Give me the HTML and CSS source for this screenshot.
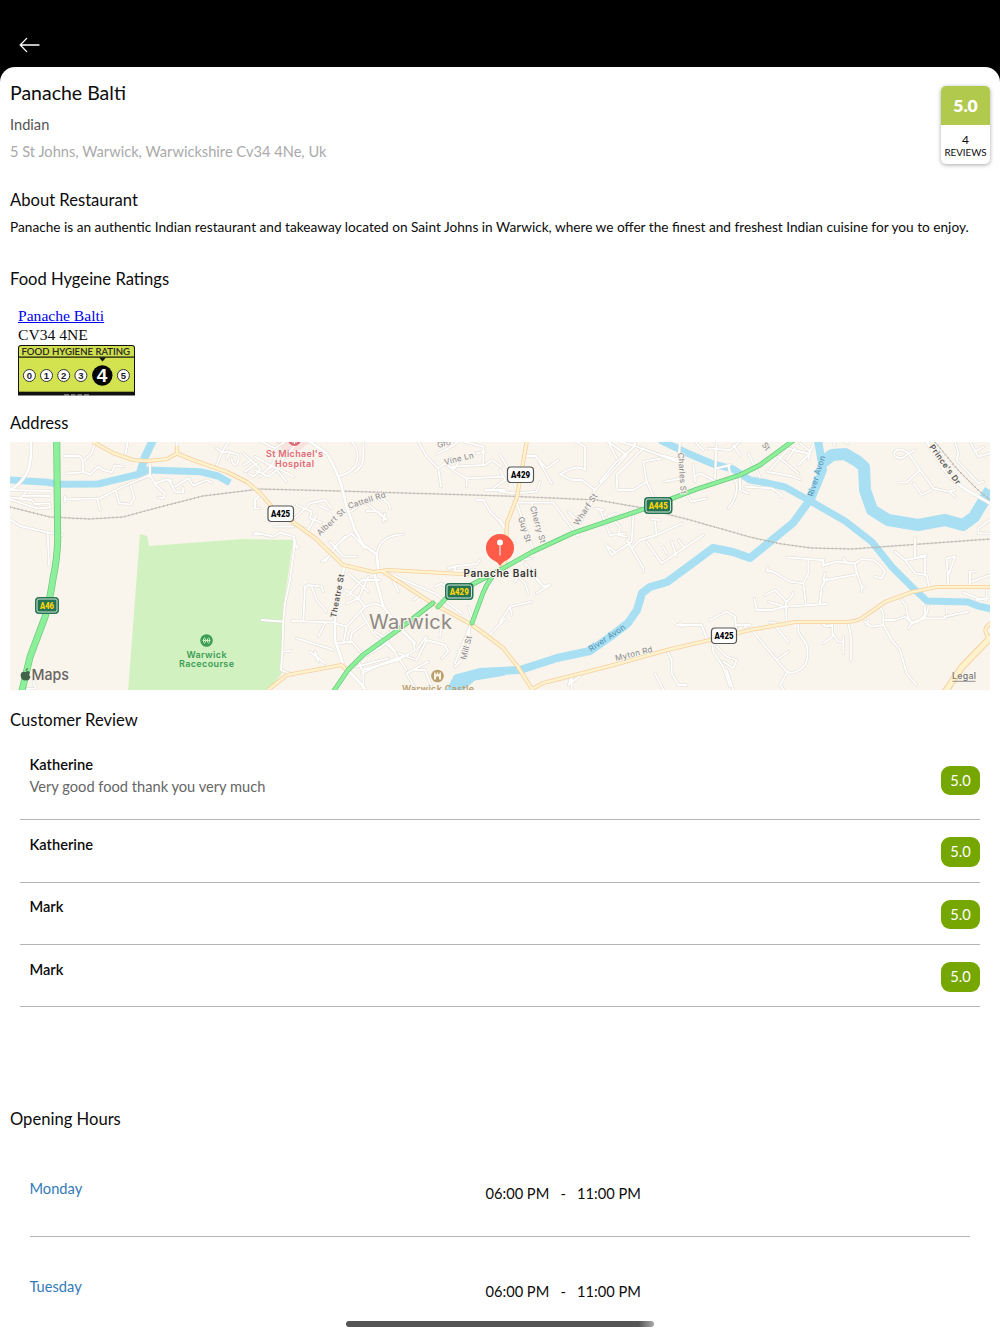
FILE: index.html
```html
<!DOCTYPE html>
<html lang="en">
<head>
<meta charset="utf-8">
<title>Panache Balti</title>
<link rel="stylesheet" href="styles.css">
</head>
<body>
<header class="topbar">
  <svg class="back" viewBox="0 0 22 16" width="22" height="16"><path d="M20 8H1.2M7.700 1.400 1.200 8 7.700 14.600"/></svg>
</header>
<main class="sheet">
  <section class="intro">
    <div class="intro-text">
      <h1>Panache Balti</h1>
      <p class="cuisine">Indian</p>
      <p class="addr">5 St Johns, Warwick, Warwickshire Cv34 4Ne, Uk</p>
    </div>
    <div class="score">
      <div class="score-value">5.0</div>
      <div class="score-count"><span>4</span><small>REVIEWS</small></div>
    </div>
  </section>

  <h2 class="about-title">About Restaurant</h2>
  <p class="about">Panache is an authentic Indian restaurant and takeaway located on Saint Johns in Warwick, where we offer the finest and freshest Indian cuisine for you to enjoy.</p>

  <h2 class="hygiene-title">Food Hygeine Ratings</h2>
  <div class="hygiene">
    <a href="#">Panache Balti</a>
    <span>CV34 4NE</span>
    <svg class="fhrs" viewBox="0 0 117 51" width="117" height="51">
      <path d="M0 50.500V3Q0 0 3 0H114Q117 0 117 3V50.500Z" fill="#111"/>
      <path d="M1 11.500V3Q1 1 3 1H114Q116 1 116 3V11.500Z" fill="#cfdf4d"/>
      <rect x="1" y="12.700" width="115" height="34" fill="#d3e34f"/>
      <text x="3.500" y="10" textLength="108.500" lengthAdjust="spacingAndGlyphs" class="fh-title">FOOD HYGIENE RATING</text>
      <path d="M81 12.500H88L84.500 16.500Z" fill="#111"/>
      <g class="fh-dots"><circle cx="11.400" cy="30.500" r="6"/><circle cx="28.500" cy="30.500" r="6"/><circle cx="45.700" cy="30.500" r="6"/><circle cx="62.900" cy="30.500" r="6"/><circle cx="105.400" cy="30.500" r="6"/></g>
      <circle cx="84.300" cy="30.500" r="10.200" fill="#050505"/>
      <g class="fh-num"><text x="11.400" y="34">0</text><text x="28.500" y="34">1</text><text x="45.700" y="34">2</text><text x="62.900" y="34">3</text><text x="105.400" y="34">5</text></g>
      <text x="84" y="37.300" class="fh-big">4</text>
      <path d="M46 50H51M53 50H57.500M59.500 50H64M66 50H71" stroke="#ccc" stroke-width="1"/>
    </svg>
  </div>

  <h2 class="address-title">Address</h2>
  <svg class="map" viewBox="10 442 980 248" width="980" height="248">
    <defs>
      <g id="streets">
        <g transform="translate(10 440) scale(.33333)">
          <path class="wide" d="M62 5Q66 70 50 100Q30 135 0 150"/>
          <path d="M165 48H205Q215 50 218 65L220 95M218 65 245 40 255 10M170 100 210 98 220 95 240 104 265 80 280 90 305 97 315 76 340 80M345 50 353 5M500 35V5M620 75 635 38 655 5M620 25 638 38 655 35 685 45Q690 65 675 75Q665 70 665 55M650 55 658 42M700 40 750 85M700 75 725 60M705 95 740 70M715 100 730 110 750 90"/>
          <path d="M420 65V105L350 135 318 150 270 175 165 178M165 170V185M262 175 270 210M318 155 328 190 362 193 373 175 362 138M420 105 440 138 465 160 460 175 445 172M435 130 470 118 480 125 495 155 520 158 518 142M470 118 485 122M495 140 535 115 550 137 590 120 605 128"/>
          <path d="M0 150 125 153M30 175 50 155M0 172 65 180 75 192 118 190 120 203 80 205 0 178M35 167 120 168M0 238 30 258 115 278 158 285M113 280 117 375M70 725 78 745 50 747M750 165 735 180V205H750M730 283H750"/>
        </g>
        <g transform="translate(255 440) scale(.33333)">
          <path class="wide" d="M165 5 215 40Q245 90 260 140L275 200 300 270 325 315 365 342 370 390 357 397 385 500 430 560 475 605 480 610"/>
          <path d="M290 5Q320 35 300 80Q285 100 253 108M325 5V50Q325 80 300 95M0 50 60 85 130 5M20 5 60 25 90 5M0 90 40 110 65 90 95 125M45 85 75 30M15 110 50 75 115 110M490 5 515 50 550 85 558 140M550 85 570 70 600 95 635 115V140M545 42 580 25 610 5M575 75 600 85 610 65M625 5 685 20V75L590 80M665 40 690 35M690 75 710 60 740 80M635 115 745 110M715 145 750 120M690 150H750"/>
          <path d="M665 180H685L705 215 750 260M105 245 135 220 165 190 210 180 230 205M125 195 170 215 165 235 200 248M135 260 160 270 185 225M190 195 220 210M0 278 55 290 75 278 117 290 125 325M60 260H115M117 290V320H130M210 365 250 310 290 280 330 325M225 305 265 350 305 350M240 320 270 290M200 365 220 350M285 215 330 185 395 240 370 215 335 213M390 220 385 245M375 170 400 190 405 205M365 342Q375 285 445 283M580 385 605 378 665 372 675 360M600 380V398M585 395 660 390"/>
          <path class="wide" d="M268 380 240 500 240 600 265 675 330 745"/>
          <path d="M145 545 150 440 160 435 200 440 205 455M170 440 185 480 215 515M118 320 105 420 90 490 85 545 82 635 78 690 115 705M85 635 108 633M20 540 83 545M110 543 235 547M210 550 190 590M125 595 235 630M165 635 210 670M180 635 190 665M240 610 290 605 325 645M240 550 275 560 265 610M270 450 310 475 340 410M275 470 320 420 375 420M405 400 430 455M280 400 340 455M275 560 330 500 360 490 385 500M275 490 310 475 330 500M320 520 355 580 420 635 385 590 430 560M360 575 400 600M285 610 290 580 330 550M400 600 380 620 310 660 320 690 430 660 480 630 475 605M320 700 395 665 460 645M305 680 400 655M325 690V745M420 640 455 690"/>
          <path d="M400 400 540 460 620 520M540 440 560 430 580 450M475 480 495 465M555 590 560 550M645 550 635 650M620 660 600 680M600 670 645 560M700 590 750 535M495 750 480 745 455 700 520 665M480 690 510 690 530 740M430 640 485 660 515 600 570 615 580 635 560 655M485 630 515 590M640 500 650 530"/>
        </g>
        <g transform="translate(500 440) scale(.33333)">
          <path d="M80 48H105L140 85 175 60M118 65 155 130M180 103 205 90Q235 75 255 90V20L230 5M180 103 215 120 245 120 285 150 380 45 325 5M325 5 350 55M285 150 275 170M300 125 350 65 405 18 545 70M430 25 350 105 352 150 400 150 440 125 430 65 485 55M440 125 460 170M405 18V5M360 5 405 18 480 45 540 60M495 125 545 115M535 70 540 5M555 155 575 185 620 175M580 75 585 125M585 110 600 100 650 125M645 115 650 5M650 85 690 75M685 75 690 100 710 130Q715 170 685 205M720 105V150L745 160M585 5 610 30M625 25 690 30 720 5M700 15 720 45M0 155 45 160 110 155 120 125M0 45 30 95 50 150M0 90 15 120"/>
          <path d="M50 188H160L230 285M50 190 75 260 100 330M95 190 110 240 130 305M0 240 12 265M10 310H45M205 215 240 250M235 275V290M240 250 280 180"/>
          <path d="M300 210 315 245 330 285 375 280M285 205 310 210M325 230 345 220M318 315 335 345 395 305 400 225 390 210M345 335 325 320M340 240 360 260 355 285 380 290M380 300 430 385 430 395M395 325 420 300 470 285 465 245M455 237 480 240M440 305 485 370 610 285M470 285 545 250M500 340 490 320M515 305 530 350M535 300 550 320M60 360 95 355M75 370 90 385 75 395M40 395 75 430 85 460M95 400 130 440 145 435M110 460 150 435M0 545 30 500 95 485M30 500 35 525M60 400 45 425M105 405 125 435"/>
          <path d="M530 555H605L620 595M540 550 545 560M630 540 680 515 705 530 710 575M635 600 640 635 670 680 690 740M650 620 680 650 710 660 700 685 670 665M710 555H750M500 630 515 660V700L535 735H560M465 700 490 750M215 710V750M175 720 215 710 205 735 250 700M680 690 700 750"/>
        </g>
        <g transform="translate(745 440) scale(.33333)">
          <path class="wide" d="M545 5 580 60Q610 120 665 150L735 190"/>
          <path d="M10 40 45 112M65 95 145 110 165 118M75 90 130 25 145 30 190 40M100 50 160 100M125 60 150 25M160 75 190 45 205 15M165 10 195 35 190 60M0 140 80 145 110 165V172M265 5 270 15M300 5 310 10M490 40Q465 20 450 35Q440 50 470 55Q480 50 490 40L525 90 485 128 460 128M525 90 565 145 610 155 630 150M505 130 530 165 560 150M615 155 630 170M490 40 510 30M630 5 640 40 635 60 700 130 715 125M675 5 700 50 735 40M690 35 715 20M735 240 700 265V280H735M700 265 735 240"/>
          <path d="M125 352 230 360 240 375 275 365 330 370 350 357 385 360 405 375 420 395 410 415 390 410M235 360V378M295 355 305 370M190 360V400L175 430 182 490M65 390 85 395 135 425 175 430M68 382V395M240 400 235 420 245 420 335 403 330 370M330 380 350 440 360 440M350 440V453M245 415 230 440 225 490M60 465 90 450 125 485 140 470 145 458M70 485 120 500 245 492M28 475 35 510 80 510 120 500M122 485 125 545"/>
          <path d="M510 295V350M450 335 480 360 510 400 545 405 552 440M480 360 540 350 540 405M520 350 545 345M610 435 605 355 630 350 612 400M675 440V395L690 395M680 425 735 405M655 458 700 475 725 480V445M695 480 735 475M470 480 485 500V520L500 550 520 545M415 540H450L480 530 500 548 540 535 600 535M540 535V500M550 500 545 520 525 540M600 530 670 515M605 520V500M360 545 380 560 415 555M370 540 365 555M490 565 500 550"/>
          <path d="M405 500 415 520V555L440 600 465 630 485 700 515 735M160 550V575L185 615Q195 665 170 685Q145 705 125 695L95 660 25 575M95 660 130 635M125 700 105 735 118 752M85 550 130 607M230 550 245 560 262 555V590L235 610M262 580 280 605 295 605M295 590V640M310 550 318 590V660M0 560 25 575M75 547 100 550"/>
        </g>
      </g>
      <g id="mainroads">
        <path d="M93 442 113 453 133 460Q150 462 167 459L177 453.500 193 460 227 472 247 482 260 493 272 507 315 538 343 565 373 572 388 570 462 574 495 575"/>
        <path d="M382 571 432 603 472 625 482 632 503 648 518 667 532 689 543 683 610 666 667 650 710 640 750 630 795 622H845Q855 622 862 618L885 602 912 592 937 587H990"/>
        <path d="M268 690 287 675 342 665 347 671M532 689V695M527 440 517 497 507 523 505 563 496 575M991 623Q985 627 985.500 631L988 638M177 453V446"/>
        <path class="wide" d="M943 695 962 667 992 636"/>
      </g>
      <g id="greenroads">
        <path class="wide" d="M56.700 440 57.700 540Q57 560 53.300 577Q50 600 45 617L30 657 21 695"/>
        <path d="M438 607 447 597 475 583 500 570 532 552 573 533 647 508 697 489 740 475 760 465 794 440M492 577Q486 585 483 593L472 623M433 603 398 630 363 655 348 670 331 695"/>
      </g>
    </defs>
    <rect x="10" y="442" width="980" height="248" fill="#f9f4ec"/>
    <path d="M275 442H310L300 450H283Z" fill="#fae3df"/>
    <path d="M140 534 147 536 149 546 243 539 293 540 287 583 283 607 282 663V673L268 692H128Z" fill="#d2f1c0"/>
    <g class="water">
      <path d="M10 480 46.700 482.300 60 484.300 98 484 138 474.300 148 470 200 471.700 218 476 230 482.700" stroke-width="7"/>
      <path d="M153 440 145 456.700 140 473" stroke-width="8"/>
      <path d="M450 692 457 678 480 672 520 670 557 658 590 651 610 637 628 623 637 610 642 593 650 587 667 582 693 563 713 548 733 552 750 558 793 523 812 497 823 470 818 440" stroke-width="8"/>
      <path d="M450 692 456 678 475 670 505 668V675L475 680 460 692Z" fill="#a8dff3"/>
      <path d="M823 462 832 455 845 454 857 461 864 467 865 490 872 510 888 520 918 525 945 520 963 525 974 517 990 490" stroke-width="12"/>
      <path d="M660 440 687 453 713 464 733 469 750 480 762 482 785 487 812 502 845 521 872 542 892 567 912 587 927 601 968 602 978 606 992 609" stroke-width="7"/>
    </g>
    <g class="rail">
      <path id="railway" d="M10 507 50 517 90 519 123 517 160 507 203 496 260 489 338 491 505 496 597 500 643 508 690 520 750 537Q780 545 812 548L852 549 990 539M935 442 958 470 978 490 990 500"/>
      <use href="#railway" class="ties"/>
    </g>
    <use href="#streets" class="street-case"/><use href="#streets" class="street"/>
    <use href="#mainroads" class="main-case"/><use href="#mainroads" class="main-fill"/>
    <use href="#greenroads" class="green-case"/><use href="#greenroads" class="green-fill"/>

    <g class="road-label">
      <text transform="translate(320 536) rotate(-43)" textLength="35">Albert St</text>
      <text transform="translate(349 509) rotate(-18)" textLength="39">Cattell Rd</text>
      <text transform="translate(445 465) rotate(-14)" textLength="30">Vine Ln</text>
      <text transform="translate(438 448) rotate(-14)">Gro</text>
      <text transform="translate(578 526) rotate(-57)" textLength="36">Wharf St</text>
      <text transform="translate(530 507) rotate(74)" textLength="38">Cherry St</text>
      <text transform="translate(518 518) rotate(72)" textLength="26">Guy St</text>
      <text transform="translate(678 453) rotate(86)" textLength="41">Charles St</text>
      <text transform="translate(761.500 445) rotate(52)">St</text>
      <text transform="translate(466 660) rotate(-76)" textLength="24">Mill St</text>
      <text transform="translate(616 661) rotate(-14)" textLength="38">Myton Rd</text>
      <text class="dark" transform="translate(336 618) rotate(-79)" textLength="44">Theatre St</text>
      <text class="dark" transform="translate(929 447) rotate(54)" textLength="47">Prince's Dr</text>
      <text class="river" transform="translate(591 652) rotate(-34)" textLength="42">River Avon</text>
      <text class="river" transform="translate(813 497) rotate(-73)" textLength="42">River Avon</text>
    </g>
    <text class="town" x="369" y="629" textLength="83">Warwick</text>
    <g class="poi hospital"><circle cx="294.500" cy="439.500" r="6.500"/><path d="M292 442H297M294.500 440V444" stroke="#fff"/><text x="294.500" y="457" textLength="57">St Michael's</text><text x="294.500" y="466.700" textLength="39">Hospital</text></g>
    <g class="poi race"><circle cx="206.500" cy="640.500" r="6.300"/><text x="206.500" y="657.500" textLength="40">Warwick</text><text x="206.500" y="667.300" textLength="55">Racecourse</text><path d="M204.500 637.500Q201.500 640.500 204.500 643.500M208.500 637.500Q211.500 640.500 208.500 643.500M203 640.500H210M205.500 638.500V642.500M207.500 638.500V642.500" stroke="#d2f1c0" fill="none"/></g>
    <g class="poi castle"><circle cx="437.500" cy="676" r="6.300"/><path d="M434 672.500H435.500V674H436.800V672.500H438.200V674H439.500V672.500H441V679.500H439V677Q437.500 675.500 436 677V679.500H434Z" fill="#fff5e0"/><text x="438" y="692.300" textLength="72">Warwick Castle</text></g>

    <g class="shield white"><rect x="268" y="506" width="25.500" height="15.500" rx="3.500"/><text x="280.500" y="517.400" textLength="19" lengthAdjust="spacingAndGlyphs">A425</text>
      <rect x="507.500" y="467" width="26" height="15.500" rx="3.500"/><text x="520.500" y="478.400" textLength="19" lengthAdjust="spacingAndGlyphs">A429</text>
      <rect x="711.500" y="628" width="25" height="15.500" rx="3.500"/><text x="724" y="639.400" textLength="19" lengthAdjust="spacingAndGlyphs">A425</text></g>
    <g class="shield green"><rect class="rim" x="35.500" y="597.500" width="23" height="16" rx="3"/><rect x="37" y="599" width="20" height="13" rx="2"/><text x="47" y="609.100" textLength="14" lengthAdjust="spacingAndGlyphs">A46</text>
      <rect class="rim" x="445.500" y="583.500" width="27.500" height="16" rx="3"/><rect x="447" y="585" width="24.500" height="13" rx="2"/><text x="459.200" y="595.300" textLength="19" lengthAdjust="spacingAndGlyphs">A429</text>
      <rect class="rim" x="644.500" y="497.500" width="27.500" height="16" rx="3"/><rect x="646" y="499" width="24.500" height="13" rx="2"/><text x="658.200" y="509.300" textLength="19" lengthAdjust="spacingAndGlyphs">A445</text></g>

    <path d="M500 566Q498 562 493 560A14 14 0 1 1 507 560Q502 562 500 566Z" fill="#ff5b49"/>
    <circle cx="500" cy="542.500" r="3" fill="#fff"/><path d="M500 545V555.500" stroke="#ffd9d4" stroke-width="1.300"/>
    <text class="pin-label" x="500" y="577.300" textLength="73">Panache Balti</text>
    <path d="M28.500 671Q29.600 672 30 673Q28 674.500 30.500 677Q29 680.500 27 680.500Q25.500 679.800 24 680.500Q21 679.500 20.600 675Q21.200 670.800 25.500 672Q27.500 670.500 28.500 671ZM25.500 671Q25.500 668.500 28 668Q28 670.500 25.500 671Z" fill="#40634a"/>
    <text class="apple-maps" x="31.500" y="680" textLength="37.500" lengthAdjust="spacingAndGlyphs">Maps</text>
    <text class="legal" x="952" y="679.300" textLength="24">Legal</text><path d="M952.500 681.300H975.500" stroke="#777" stroke-width=".8"/>
  </svg>

  <h2 class="reviews-title">Customer Review</h2>
  <ul class="reviews">
    <li class="review long"><div><strong>Katherine</strong><p>Very good food thank you very much</p></div><span class="pill">5.0</span></li>
    <li class="review"><div><strong>Katherine</strong></div><span class="pill">5.0</span></li>
    <li class="review"><div><strong>Mark</strong></div><span class="pill">5.0</span></li>
    <li class="review"><div><strong>Mark</strong></div><span class="pill">5.0</span></li>
  </ul>

  <h2 class="hours-title">Opening Hours</h2>
  <ul class="hours">
    <li><span class="day">Monday</span><span class="time"><span>06:00 PM</span><span>-</span><span>11:00 PM</span></span></li>
    <li><span class="day">Tuesday</span><span class="time"><span>06:00 PM</span><span>-</span><span>11:00 PM</span></span></li>
  </ul>
</main>
<div class="home-bar"></div>
</body>
</html>
```
FILE: styles.css
```css
* { box-sizing: border-box; }
html, body { margin: 0; height: 1334px; overflow: hidden; background: #000; }
body { font-family: Lato, sans-serif; font-size: 15.6px; color: #0c0c0c; }
h1, h2, p, ul { margin: 0; padding: 0; font-weight: 400; list-style: none; }
h2 { font-size: 16.6px; line-height: 22px; }

.topbar { height: 66.6px; padding: 37px 0 0 19px; }
.back { display: block; fill: none; stroke: #fff; stroke-width: 1.3; stroke-linecap: round; }
.sheet { height: 1267.4px; padding: 13.4px 10px 0; background: #fff; border-radius: 15px 15px 0 0; overflow: hidden; }

.intro { display: flex; justify-content: space-between; height: 108px; }
h1 { font-size: 19.5px; line-height: 26px; }
.cuisine { margin-top: 9px; font-size: 14.65px; line-height: 20px; color: #555; }
.addr { margin-top: 7px; font-size: 14.65px; line-height: 20px; color: #aaa; }
.score { width: 49px; height: 78px; margin-top: 6px; border-radius: 5px; overflow: hidden; text-align: center; background: #fff; box-shadow: 0 1px 4px rgba(0, 0, 0, .35); }
.score-value { height: 39px; line-height: 40px; background: #b1c94d; color: #fff; font-size: 17.6px; font-weight: 800; }
.score-count { display: flex; flex-direction: column; padding-top: 8px; font-size: 12px; line-height: 13px; }
.score-count small { font-size: 9.8px; white-space: nowrap; }

.about-title { margin-top: 1px; height: 28px; }
.about { font-size: 13.67px; line-height: 20px; white-space: nowrap; }
.hygiene-title { margin-top: 31px; }
.hygiene { display: flex; flex-direction: column; align-items: flex-start; height: 106px; margin: 16px 0 0 8px; font: 15.6px/19px "Liberation Serif", serif; }
.hygiene a { color: #00e; }
.fhrs { display: block; margin-top: 1px; }
.fh-title { font: 500 10px Lato, sans-serif; fill: #222; stroke: #222; stroke-width: .1; }
.fh-dots { fill: #fff; stroke: #333; stroke-width: 1; }
.fh-num { font: bold 9.5px "Liberation Sans", sans-serif; fill: #222; text-anchor: middle; }
.fh-big { font: bold 19px "Liberation Sans", sans-serif; fill: #fff; text-anchor: middle; }
.address-title { margin-bottom: 8px; }

.map { display: block; overflow: hidden; font-family: Inter, sans-serif; }
.map use, .water { fill: none; stroke-linejoin: round; }
.water { stroke: #a8dff3; }
.rail { fill: none; stroke: #b9b5af; stroke-width: .8; }
.map .ties { stroke-width: 2; stroke-dasharray: .8 3.2; }
.wide { stroke-width: var(--wide); }
.street-case { --wide: 11px; stroke: #e2ddd5; stroke-width: 9; stroke-linecap: round; }
.street { --wide: 8px; stroke: #fff; stroke-width: 5.5; stroke-linecap: round; }
.main-case { --wide: 7px; stroke: #f7cfa1; stroke-width: 4.2; }
.main-fill { --wide: 5px; stroke: #fff3ce; stroke-width: 2.5; }
.green-case { --wide: 7px; stroke: #69c77c; stroke-width: 4.8; stroke-linecap: round; }
.green-fill { --wide: 5.6px; stroke: #8cf09b; stroke-width: 3.4; stroke-linecap: round; }
.road-label { font-size: 8px; fill: #85858a; stroke: #f9f4ec; stroke-width: 1.6; paint-order: stroke; }
.road-label .dark { fill: #555; font-weight: 600; }
.road-label .river { fill: #4e8eac; stroke: #a8dff3; }
.town { font-size: 20px; fill: #8d8984; stroke: #f9f4ec; stroke-width: 2; paint-order: stroke; }
.poi { font-size: 9px; font-weight: 600; text-anchor: middle; }
.hospital { fill: #df6b78; }
.race { fill: #3b9d55; }
.castle { fill: #b99f70; }
.shield { font: 900 9.6px Roboto, sans-serif; text-anchor: middle; }
.shield.white rect { fill: #fff; stroke: #555; stroke-width: 1.2; }
.shield.green rect { fill: #257451; stroke: #fff; stroke-width: .8; }
.shield.green .rim { fill: #257451; stroke: #257451; stroke-width: 1; }
.shield.green text { fill: #ffd60a; }
.pin-label { font-size: 10px; font-weight: 600; fill: #333; text-anchor: middle; stroke: #f9f4ec; stroke-width: 2; paint-order: stroke; }
.apple-maps { font-size: 15px; font-weight: 500; fill: #686662; }
.legal { font-size: 8.8px; font-weight: 500; fill: #777; }

.reviews-title { margin-top: 19px; }
.reviews { margin: 9px 10px 0; }
.review { display: flex; justify-content: space-between; align-items: center; height: 62.4px; padding: 2px 0 0 9.5px; border-bottom: 1.2px solid #b5b5b5; }
.review.long { height: 80.3px; }
.review div { align-self: flex-start; padding-top: 12.8px; }
.review strong { display: block; font-size: 14.65px; line-height: 20px; font-weight: 600; }
.review p { margin-top: 2.4px; font-size: 14.65px; line-height: 20px; color: #666; }
.pill { width: 39px; height: 29.5px; border-radius: 9px; background: #76a600; color: #fff; text-align: center; font-size: 14.65px; line-height: 30px; }

.hours-title { margin-top: 100.2px; }
.hours { margin: 9.8px 20px 0 19.5px; }
.hours li { display: flex; height: 97.7px; border-bottom: 1.2px solid #b5b5b5; font-size: 14.65px; line-height: 20px; }
.day { width: 456px; padding-top: 40px; color: #337ab7; }
.time { display: flex; gap: 11.2px; padding-top: 45px; }

.home-bar { position: absolute; left: 346px; top: 1321px; width: 308px; height: 5.5px; border-radius: 3px; background: linear-gradient(90deg, #555 95%, #aaa); }
```
